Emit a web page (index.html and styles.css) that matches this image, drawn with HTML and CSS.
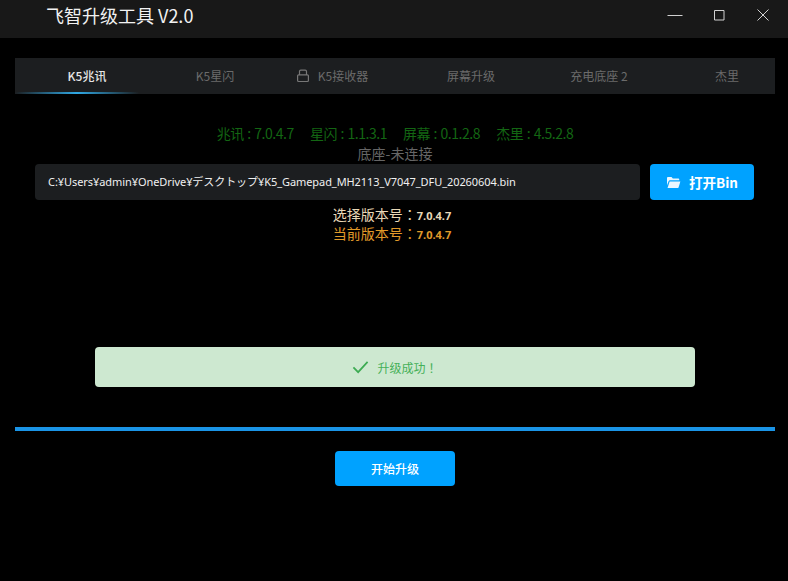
FILE: index.html
```html
<!DOCTYPE html>
<html lang="zh-CN">
<head>
<meta charset="utf-8">
<title>飞智升级工具 V2.0</title>
<link rel="stylesheet" href="styles.css">
</head>
<body>
<header class="titlebar">
  <div class="app-title">飞智升级工具 V2.0</div>
  <div class="win-controls">
    <svg class="win-icon" viewBox="0 0 16 16"><path d="M0.500 8.500H15.500"/></svg>
    <svg class="win-icon" viewBox="0 0 16 16"><path d="M3.500 3.500H13V13H3.500Z"/></svg>
    <svg class="win-icon" viewBox="0 0 16 16"><path d="M2.500 2.500L13.500 13.500M13.500 2.500L2.500 13.500"/></svg>
  </div>
</header>
<main class="content">
  <nav class="tabs">
    <div class="tab tab-active">K5兆讯</div>
    <div class="tab">K5星闪</div>
    <div class="tab">
      <svg class="lock" viewBox="0 0 14 14"><path d="M3.500 6V2.500C3.500 1.700 4 1.200 4.800 1.200H9.200C10 1.200 10.500 1.700 10.500 2.500V6M2.600 5.800H11.400C12 5.800 12.400 6.200 12.400 6.800V11.500C12.400 12.100 12 12.500 11.400 12.500H2.600C2 12.500 1.600 12.100 1.600 11.500V6.800C1.600 6.200 2 5.800 2.600 5.800Z"/></svg>
      K5接收器
    </div>
    <div class="tab">屏幕升级</div>
    <div class="tab">充电底座 2</div>
    <div class="tab">杰里</div>
    <div class="tab-indicator"></div>
  </nav>
  <div class="versions">
    <span>兆讯 : 7.0.4.7</span>
    <span>星闪 : 1.1.3.1</span>
    <span>屏幕 : 0.1.2.8</span>
    <span>杰里 : 4.5.2.8</span>
  </div>
  <div class="dock-status">底座-未连接</div>
  <div class="file-row">
    <div class="file-path">C:¥Users¥admin¥OneDrive¥デスクトップ¥K5_Gamepad_MH2113_V7047_DFU_20260604.bin</div>
    <button class="btn btn-open">
      <svg class="folder" viewBox="0 0 16 14"><path d="M1 2.200C1 1.500 1.500 1 2.200 1H5.800L7.300 2.600H13C13.700 2.600 14.200 3.100 14.200 3.800V4.700H4.200C3.500 4.700 3 5 2.700 5.700L1 10Z"/><path d="M3.800 6H15.400L13.400 12.300C13.200 12.800 12.900 13 12.400 13H1.600Z"/></svg>
      打开Bin
    </button>
  </div>
  <div class="ver-line ver-selected">选择版本号<span class="mark" lang="zh-TW">：</span><b>7.0.4.7</b></div>
  <div class="ver-line ver-current">当前版本号<span class="mark" lang="zh-TW">：</span><b>7.0.4.7</b></div>
  <div class="alert">
    <svg class="check" viewBox="0 0 18 14"><path d="M1.500 7.500L6.500 12.500L16.500 1.500"/></svg>
    <span>升级成功<span class="mark" lang="zh-TW">！</span></span>
  </div>
  <div class="progress"></div>
  <button class="btn btn-start">开始升级</button>
</main>
</body>
</html>
```
FILE: styles.css
```css
* { box-sizing: border-box; }
html, body { margin: 0; height: 100%; }
body {
  background: #000;
  color: #fff;
  font-family: "Noto Sans CJK SC", "Noto Sans", sans-serif;
  overflow: hidden;
}
.mark { font-family: "Noto Sans CJK TC", sans-serif; }
.titlebar {
  height: 38px;
  background: #181818;
  display: flex;
  justify-content: space-between;
  padding-left: 46px;
}
.app-title {
  font-size: 18px;
  line-height: 30px;
  color: #f2f2f2;
}
.win-controls {
  display: flex;
  gap: 28px;
  padding: 7px 17px 0 0;
}
.win-icon {
  width: 16px;
  height: 16px;
  fill: none;
  stroke: #d0d0d0;
  stroke-width: 1;
}
.content {
  display: flex;
  flex-direction: column;
  align-items: center;
  padding: 20px 13px 0 15px;
}
.tabs {
  position: relative;
  align-self: stretch;
  height: 36px;
  display: flex;
  padding-left: 8px;
  background: #1c1e20;
  overflow: hidden;
}
.tab {
  position: relative;
  flex: 0 0 128px;
  text-align: center;
  font-size: 12px;
  line-height: 36px;
  color: #6b6b6b;
}
.tab-active { color: #e6e6e6; font-weight: 500; }
.tab-indicator {
  position: absolute;
  left: 0;
  bottom: 0;
  width: 124px;
  height: 2px;
  background: linear-gradient(90deg, rgba(30,160,225,0) 0%, #2fa8e4 50%, rgba(30,160,225,0) 100%);
}
.lock {
  position: absolute;
  left: 17px;
  top: 11px;
  width: 14px;
  height: 14px;
  fill: none;
  stroke: #777;
  stroke-width: 1.200;
}
.versions {
  display: flex;
  gap: 16px;
  margin-top: 29px;
  font-size: 14px;
  letter-spacing: -0.45px;
  word-spacing: 0.8px;
  line-height: 20px;
  color: #136613;
}
.versions span { white-space: nowrap; }
.dock-status {
  margin-top: 1px;
  font-size: 14px;
  line-height: 19px;
  color: #666;
}
.file-row {
  align-self: stretch;
  display: flex;
  gap: 10px;
  padding: 0 21px 0 20px;
  margin-top: 1px;
}
.file-path {
  flex: 1;
  height: 36px;
  background: #1c1e20;
  border-radius: 4px;
  padding-left: 13px;
  font-family: "Noto Sans", "Noto Sans CJK JP", sans-serif;
  font-size: 11px;
  letter-spacing: -0.07px;
  line-height: 36px;
  color: #f0f0f0;
  white-space: nowrap;
}
.btn {
  border: 0;
  border-radius: 4px;
  background: #00a2ff;
  color: #fff;
  font-family: inherit;
  display: flex;
  align-items: center;
  justify-content: center;
}
.btn-open {
  flex: 0 0 104px;
  height: 36px;
  gap: 8px;
  font-size: 13.500px;
  font-weight: 700;
}
.folder {
  width: 15px;
  height: 13px;
  fill: #eaf6ff;
}
.ver-line {
  font-size: 14px;
  line-height: 19px;
  height: 19px;
  padding-right: 6px;
  white-space: nowrap;
}
.ver-line b {
  font-family: "Open Sans", sans-serif;
  font-size: 11px;
  font-weight: 700;
}
.ver-selected { margin-top: 5px; color: #e8d8b8; }
.ver-current { color: #e09a2a; }
.alert {
  margin-top: 104px;
  width: 600px;
  height: 40px;
  border-radius: 4px;
  background: #cde8d0;
  color: #45b058;
  display: flex;
  align-items: center;
  justify-content: center;
  gap: 8px;
  font-size: 12px;
}
.check {
  width: 17px;
  height: 14px;
  fill: none;
  stroke: #3cab52;
  stroke-width: 1.800;
}
.progress {
  align-self: stretch;
  margin-top: 40px;
  height: 4px;
  background: #1a94e6;
}
.btn-start {
  margin-top: 20px;
  width: 120px;
  height: 35px;
  font-size: 12px;
  font-weight: 500;
}
```
